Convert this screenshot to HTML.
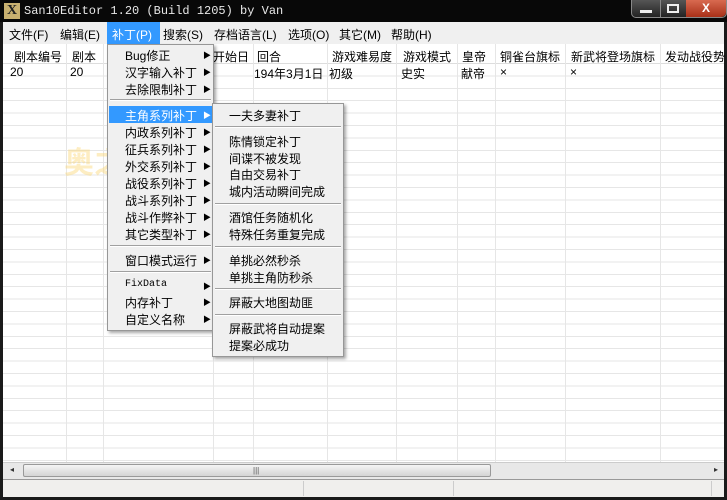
<!DOCTYPE html>
<html><head><meta charset="utf-8"><style>
*{margin:0;padding:0;box-sizing:border-box}
body{width:727px;height:500px;overflow:hidden;background:#1a1a1a;font-family:"Liberation Sans","Noto Sans CJK SC","WenQuanYi Zen Hei",sans-serif;font-size:12px;color:#000;position:relative}
.abs{position:absolute}
#title{left:0;top:0;width:727px;height:22px;background:#080808;color:#e8e8e8;font-family:"Liberation Mono",monospace;font-size:12px;line-height:22px;padding-left:24px}
#menubar{left:3px;top:22px;width:721px;height:22px;background:#f0f0f0;}
#menubar span{position:absolute;top:4px;font-size:12px}
#grid{left:3px;top:44px;width:721px;height:418px;background:#fff;
background-image:repeating-linear-gradient(to bottom,transparent 0,transparent 11.4px,#e6e6e6 11.4px,#e6e6e6 12.4px);background-position:0 20px}
#hdr{left:3px;top:44px;width:721px;height:20px;background:#fff;border-bottom:1px solid #ddd}
.vl{position:absolute;top:44px;height:418px;width:1px;background:#e6e6e6}
.h{position:absolute;top:48px;font-size:12px}
.d{position:absolute;top:65px;font-size:12px}
.menu{background:#f0f0f0;border:1px solid #979797;box-shadow:2px 2px 3px rgba(0,0,0,.35)}
.mi{position:absolute;font-size:12px;white-space:nowrap}
.ar{position:absolute;font-size:8px}
.sep{position:absolute;height:2px;border-top:1px solid #a0a0a0;border-bottom:1px solid #fff}
</style></head><body>
<div class="abs" id="title">San10Editor 1.20 (Build 1205) by Van</div>
<div class="abs" style="left:4px;top:3px;width:16px;height:16px;background:#c8b070;color:#222;font:bold 14px 'Liberation Serif',serif;text-align:center;line-height:16px">X</div>
<div class="abs" style="left:631px;top:0;width:96px;height:18px;border:1px solid #888;border-top:none;border-radius:0 0 5px 5px;background:linear-gradient(#555,#222)"></div>
<div class="abs" style="left:660px;top:0;width:1px;height:18px;background:#888"></div>
<div class="abs" style="left:686px;top:0;width:40px;height:17px;background:linear-gradient(#d86a50,#a83018);border-radius:0 0 5px 0;color:#fff;text-align:center;font-weight:bold;font-size:12px;line-height:16px">X</div>
<div class="abs" style="left:640px;top:10px;width:12px;height:3px;background:#eee"></div>
<div class="abs" style="left:667px;top:4px;width:12px;height:9px;border:2px solid #eee"></div>

<div class="abs" id="menubar">
<span style="left:6px">文件(F)</span><span style="left:57px">编辑(E)</span>
<span style="left:104px;top:0;height:22px;width:53px;background:#3399ff;color:#fff;padding:4px 0 0 5px">补丁(P)</span>
<span style="left:160px">搜索(S)</span><span style="left:211px">存档语言(L)</span><span style="left:285px">选项(O)</span><span style="left:336px">其它(M)</span><span style="left:388px">帮助(H)</span>
</div>

<div class="abs" id="grid"></div>
<div class="abs" id="hdr"></div>
<div class="vl" style="left:66px"></div><div class="vl" style="left:103px"></div><div class="vl" style="left:213px"></div><div class="vl" style="left:253px"></div><div class="vl" style="left:327px"></div><div class="vl" style="left:396px"></div><div class="vl" style="left:457px"></div><div class="vl" style="left:495px"></div><div class="vl" style="left:565px"></div><div class="vl" style="left:660px"></div>
<div class="h" style="left:14px">剧本编号</div><div class="h" style="left:72px">剧本</div><div class="h" style="left:213px">开始日</div><div class="h" style="left:257px">回合</div><div class="h" style="left:332px">游戏难易度</div><div class="h" style="left:403px">游戏模式</div><div class="h" style="left:462px">皇帝</div><div class="h" style="left:500px">铜雀台旗标</div><div class="h" style="left:571px">新武将登场旗标</div><div class="h" style="left:665px">发动战役势</div>
<div class="d" style="left:10px">20</div><div class="d" style="left:70px">20</div><div class="d" style="left:254px">194年3月1日</div><div class="d" style="left:329px">初级</div><div class="d" style="left:401px">史实</div><div class="d" style="left:461px">献帝</div><div class="d" style="left:500px">×</div><div class="d" style="left:570px">×</div>
<div class="abs" style="left:64px;top:138px;font-size:30px;font-weight:bold;color:rgba(250,215,120,.45)">奥之</div>

<!-- scrollbar -->
<div class="abs" style="left:3px;top:462px;width:721px;height:17px;background:#e8e8e8;border-top:1px solid #ccc"></div>
<div class="abs" style="left:23px;top:464px;width:468px;height:13px;border:1px solid #999;border-radius:2px;background:linear-gradient(#f4f4f4,#d4d4d4)"></div>
<div class="abs" style="left:253px;top:466px;font-size:8px;color:#555">|||</div>
<div class="abs" style="left:10px;top:465px;font-size:8px;color:#333">◂</div>
<div class="abs" style="left:714px;top:465px;font-size:8px;color:#333">▸</div>
<!-- status -->
<div class="abs" style="left:3px;top:479px;width:721px;height:18px;background:#f0efed;border-top:1px solid #999"></div>
<div class="abs" style="left:303px;top:481px;width:1px;height:15px;background:#ccc"></div>
<div class="abs" style="left:453px;top:481px;width:1px;height:15px;background:#ccc"></div>
<div class="abs" style="left:711px;top:481px;width:1px;height:15px;background:#ccc"></div>

<!-- patch menu -->
<div class="abs menu" style="left:107px;top:44px;width:107px;height:287px"></div>
<div class="abs" style="left:109px;top:106px;width:103px;height:17px;background:#3399ff"></div>
<div class="mi" style="left:125px;top:47px">Bug修正</div>
<div class="mi" style="left:125px;top:64px">汉字输入补丁</div>
<div class="mi" style="left:125px;top:81px">去除限制补丁</div>
<div class="sep" style="left:110px;top:99px;width:101px"></div>
<div class="mi" style="left:125px;top:107px;color:#fff">主角系列补丁</div>
<div class="mi" style="left:125px;top:124px">内政系列补丁</div>
<div class="mi" style="left:125px;top:141px">征兵系列补丁</div>
<div class="mi" style="left:125px;top:158px">外交系列补丁</div>
<div class="mi" style="left:125px;top:175px">战役系列补丁</div>
<div class="mi" style="left:125px;top:192px">战斗系列补丁</div>
<div class="mi" style="left:125px;top:209px">战斗作弊补丁</div>
<div class="mi" style="left:125px;top:226px">其它类型补丁</div>
<div class="sep" style="left:110px;top:245px;width:101px"></div>
<div class="mi" style="left:125px;top:252px">窗口模式运行</div>
<div class="sep" style="left:110px;top:271px;width:101px"></div>
<div class="mi" style="left:125px;top:279px;font-family:'Liberation Mono',monospace;font-size:10px">FixData</div>
<div class="mi" style="left:125px;top:294px">内存补丁</div>
<div class="mi" style="left:125px;top:311px">自定义名称</div>
<div class="ar" style="left:203px;top:50px">▶</div><div class="ar" style="left:203px;top:67px">▶</div><div class="ar" style="left:203px;top:84px">▶</div>
<div class="ar" style="left:203px;top:110px;color:#fff">▶</div><div class="ar" style="left:203px;top:127px">▶</div><div class="ar" style="left:203px;top:144px">▶</div><div class="ar" style="left:203px;top:161px">▶</div><div class="ar" style="left:203px;top:178px">▶</div><div class="ar" style="left:203px;top:195px">▶</div><div class="ar" style="left:203px;top:212px">▶</div><div class="ar" style="left:203px;top:229px">▶</div><div class="ar" style="left:203px;top:255px">▶</div><div class="ar" style="left:203px;top:281px">▶</div><div class="ar" style="left:203px;top:297px">▶</div><div class="ar" style="left:203px;top:314px">▶</div>

<!-- submenu -->
<div class="abs menu" style="left:212px;top:103px;width:132px;height:254px"></div>
<div class="mi" style="left:229px;top:107px">一夫多妻补丁</div>
<div class="sep" style="left:215px;top:126px;width:126px"></div>
<div class="mi" style="left:229px;top:133px">陈情锁定补丁</div>
<div class="mi" style="left:229px;top:150px">间谍不被发现</div>
<div class="mi" style="left:229px;top:166px">自由交易补丁</div>
<div class="mi" style="left:229px;top:183px">城内活动瞬间完成</div>
<div class="sep" style="left:215px;top:203px;width:126px"></div>
<div class="mi" style="left:229px;top:209px">酒馆任务随机化</div>
<div class="mi" style="left:229px;top:226px">特殊任务重复完成</div>
<div class="sep" style="left:215px;top:246px;width:126px"></div>
<div class="mi" style="left:229px;top:252px">单挑必然秒杀</div>
<div class="mi" style="left:229px;top:269px">单挑主角防秒杀</div>
<div class="sep" style="left:215px;top:288px;width:126px"></div>
<div class="mi" style="left:229px;top:294px">屏蔽大地图劫匪</div>
<div class="sep" style="left:215px;top:314px;width:126px"></div>
<div class="mi" style="left:229px;top:320px">屏蔽武将自动提案</div>
<div class="mi" style="left:229px;top:337px">提案必成功</div>
</body></html>
